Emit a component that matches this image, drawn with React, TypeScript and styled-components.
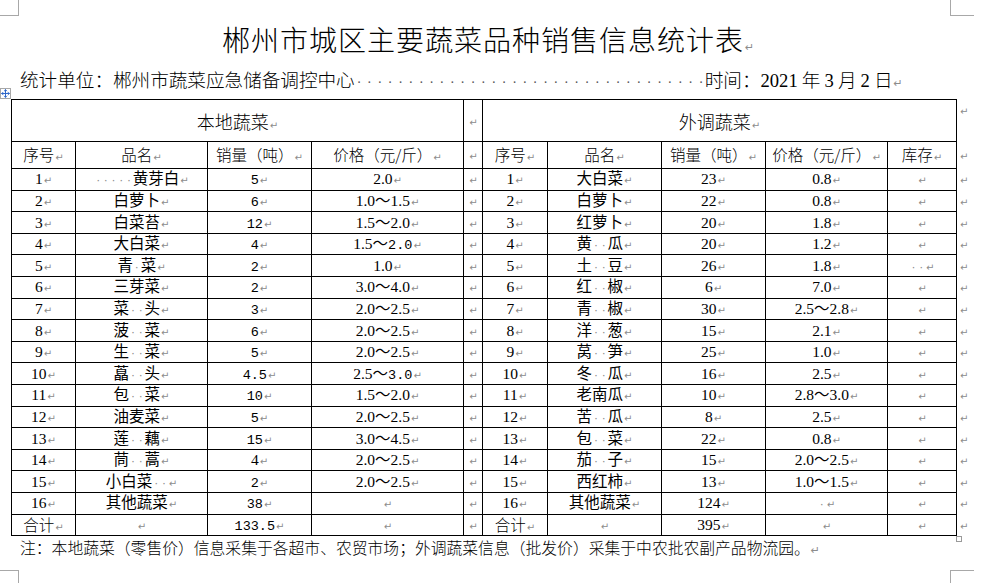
import React from 'react';
import styled, { createGlobalStyle, css } from 'styled-components';
import { Move } from 'lucide-react';

type LeftRow = [string, string, string, string];
type RightRow = [string, string, string, string, string];

const leftRows: LeftRow[] = [
  ['1', '·····黄芽白', '{5}', '2.0'],
  ['2', '白萝卜', '{6}', '1.0～1.5'],
  ['3', '白菜苔', '{12}', '1.5～2.0'],
  ['4', '大白菜', '{4}', '1.5～{2.0}'],
  ['5', '青·菜', '{2}', '1.0'],
  ['6', '三芽菜', '{2}', '3.0～4.0'],
  ['7', '菜··头', '{3}', '2.0～2.5'],
  ['8', '菠··菜', '{6}', '2.0～2.5'],
  ['9', '生··菜', '{5}', '2.0～2.5'],
  ['10', '藠··头', '{4.5}', '2.5～{3.0}'],
  ['11', '包··菜', '{10}', '1.5～2.0'],
  ['12', '油麦菜', '{5}', '2.0～2.5'],
  ['13', '莲··藕', '{15}', '3.0～4.5'],
  ['14', '茼··蒿', '4', '2.0～2.5'],
  ['15', '小白菜··', '{2}', '2.0～2.5'],
  ['16', '其他蔬菜', '{38}', ''],
];

const rightRows: RightRow[] = [
  ['1', '大白菜', '23', '0.8', ''],
  ['2', '白萝卜', '22', '0.8', ''],
  ['3', '红萝卜', '20', '1.8', ''],
  ['4', '黄··瓜', '20', '1.2', ''],
  ['5', '土··豆', '26', '1.8', '··'],
  ['6', '红··椒', '6', '7.0', ''],
  ['7', '青··椒', '30', '2.5～2.8', ''],
  ['8', '洋··葱', '15', '2.1', ''],
  ['9', '莴··笋', '25', '1.0', ''],
  ['10', '冬··瓜', '16', '2.5', ''],
  ['11', '老南瓜', '10', '2.8～3.0', ''],
  ['12', '苦··瓜', '8', '2.5', ''],
  ['13', '包··菜', '22', '0.8', ''],
  ['14', '茄··子', '15', '2.0～2.5', ''],
  ['15', '西红柿', '13', '1.0～1.5', ''],
  ['16', '其他蔬菜', '124', '·', ''],
];

const colWidths = [64, 132, 104, 152, 19, 65, 114, 104, 122, 69, 12];

// "·" is a visible space mark, {..} is text set in the narrow SimSun-like face
const content = (text: string) => {
  const parts: React.ReactNode[] = [];
  const re = /(\{[^}]*\}|·)/g;
  let last = 0;
  let m: RegExpExecArray | null;
  let k = 0;
  while ((m = re.exec(text))) {
    if (m.index > last) parts.push(text.slice(last, m.index));
    if (m[0] === '·') parts.push(<Dot key={k++}>·</Dot>);
    else parts.push(<Sim key={k++}>{m[0].slice(1, -1)}</Sim>);
    last = m.index + m[0].length;
  }
  if (last < text.length) parts.push(text.slice(last));
  return (
    <>
      {parts}
      <Mark>↵</Mark>
    </>
  );
};

const App = (): JSX.Element => {
  return (
    <Page>
      <GlobalStyle />
      <CropMark $corner='tl' />
      <CropMark $corner='tr' />
      <CropMark $corner='bl' />
      <CropMark $corner='br' />

      <Title>
        郴州市城区主要蔬菜品种销售信息统计表<Mark $big>↵</Mark>
      </Title>
      <InfoLine>
        <Lead>统计单位：郴州市蔬菜应急储备调控中心</Lead>
        <Leader>{'·'.repeat(37)}</Leader>
        <Lead>
          时间：<Num>2021</Num> 年 <Num>3</Num> 月 <Num>2</Num> 日<Mark $big>↵</Mark>
        </Lead>
      </InfoLine>

      <TableWrap>
        <MoveHandle>
          <Move size={9} strokeWidth={2.6} color='#2a64c8' />
        </MoveHandle>
        <Sheet>
          <colgroup>
            {colWidths.map((w, i) => (
              <Col key={i} $w={w} />
            ))}
          </colgroup>
          <tbody>
            <Row $h={42}>
              <GroupCell colSpan={4}>本地蔬菜<Mark>↵</Mark></GroupCell>
              <Cell>{content('')}</Cell>
              <GroupCell colSpan={5}>外调蔬菜<Mark>↵</Mark></GroupCell>
              <EndCell $top><Mark>↵</Mark></EndCell>
            </Row>
            <Row $h={27}>
              {['序号', '品名', '销量（吨）', '价格（元/斤）'].map((t) => (
                <HeadCell key={'l' + t}>{content(t)}</HeadCell>
              ))}
              <Cell>{content('')}</Cell>
              {['序号', '品名', '销量（吨）', '价格（元/斤）', '库存'].map((t) => (
                <HeadCell key={'r' + t}>{content(t)}</HeadCell>
              ))}
              <EndCell><Mark>↵</Mark></EndCell>
            </Row>
            {leftRows.map((l, i) => {
              const r = rightRows[i];
              return (
                <Row key={l[0]} $h={21.6}>
                  {l.map((t, j) => (
                    <Cell key={'l' + j}>{content(t)}</Cell>
                  ))}
                  <Cell>{content('')}</Cell>
                  {r.map((t, j) => (
                    <Cell key={'r' + j}>{content(t)}</Cell>
                  ))}
                  <EndCell><Mark>↵</Mark></EndCell>
                </Row>
              );
            })}
            <Row $h={21.6}>
              <HeadCell>{content('合计')}</HeadCell>
              <Cell>{content('')}</Cell>
              <Cell>{content('{133.5}')}</Cell>
              <Cell>{content('')}</Cell>
              <Cell>{content('')}</Cell>
              <HeadCell>{content('合计')}</HeadCell>
              <Cell>{content('')}</Cell>
              <Cell>{content('395')}</Cell>
              <Cell>{content('')}</Cell>
              <Cell>{content('')}</Cell>
              <EndCell><Mark>↵</Mark></EndCell>
            </Row>
          </tbody>
        </Sheet>
        <ResizeHandle />
      </TableWrap>

      <Note>
        注：本地蔬菜（零售价）信息采集于各超市、农贸市场；外调蔬菜信息（批发价）采集于中农批农副产品物流园。<Mark $big>↵</Mark>
      </Note>
    </Page>
  );
};

export default App;

const GlobalStyle = createGlobalStyle`
  html, body {
    margin: 0;
    padding: 0;
    background: #ffffff;
  }
`;

const Page = styled.div`
  position: relative;
  width: 993px;
  height: 583px;
  overflow: hidden;
  background: #ffffff;
  color: #000000;
  font-family: 'Liberation Serif', 'Noto Sans CJK SC', serif;
`;

const CropMark = styled.div<{ $corner: 'tl' | 'tr' | 'bl' | 'br' }>`
  position: absolute;
  border: 0 solid #a8a8a8;
  ${(p) =>
    p.$corner === 'tl' &&
    css`
      left: 0;
      top: 0;
      width: 18px;
      height: 15px;
      border-right-width: 1px;
      border-bottom-width: 1px;
    `}
  ${(p) =>
    p.$corner === 'tr' &&
    css`
      left: 950px;
      top: 0;
      width: 23px;
      height: 15px;
      border-left-width: 1px;
      border-bottom-width: 1px;
    `}
  ${(p) =>
    p.$corner === 'bl' &&
    css`
      left: 0;
      top: 570px;
      width: 18px;
      height: 13px;
      border-right-width: 1px;
      border-top-width: 1px;
    `}
  ${(p) =>
    p.$corner === 'br' &&
    css`
      left: 950px;
      top: 570px;
      width: 23px;
      height: 13px;
      border-left-width: 1px;
      border-top-width: 1px;
    `}
`;

const Mark = styled.span<{ $big?: boolean }>`
  font-family: 'DejaVu Sans', sans-serif;
  font-size: ${(p) => (p.$big ? '11px' : '10px')};
  font-weight: 400;
  line-height: 0;
  color: #8c8c8c;
  margin-left: 1px;
`;

const Dot = styled.span`
  display: inline-block;
  width: 7.7px;
  text-align: center;
  font-family: 'DejaVu Sans', sans-serif;
  font-size: 11px;
  line-height: 0;
  color: #8a8a8a;
`;

const Sim = styled.span`
  font-family: 'Liberation Mono', monospace;
  font-size: 13.5px;
  line-height: 0;
`;

const Title = styled.div`
  height: 36px;
  margin: 21px 0 0 11px;
  width: 945px;
  padding-left: 10px;
  box-sizing: border-box;
  text-align: center;
  font-family: 'Noto Sans CJK SC', sans-serif;
  font-size: 28px;
  letter-spacing: 1px;
  font-weight: 300;
  line-height: 36px;
  white-space: nowrap;
`;

const InfoLine = styled.div`
  display: flex;
  align-items: baseline;
  height: 24px;
  margin: 10px 0 0 20px;
  font-size: 18.6px;
  line-height: 24px;
  white-space: nowrap;
`;

const Lead = styled.span`
  flex: none;
  font-family: 'Noto Sans CJK SC', sans-serif;
  font-weight: 300;
`;

const Num = styled.span`
  font-family: 'Liberation Serif', serif;
  font-weight: 400;
`;

const Leader = styled.span`
  flex: none;
  width: 345px;
  margin-right: 5px;
  font-family: 'Liberation Serif', serif;
  color: #555555;
  font-size: 14px;
  line-height: 24px;
  letter-spacing: 5.7px;
  padding-left: 2px;
  box-sizing: border-box;
`;

const TableWrap = styled.div`
  position: relative;
  margin: 8px 0 0 11px;
  width: 957px;
`;

const MoveHandle = styled.div`
  position: absolute;
  left: -11px;
  top: -11px;
  width: 9px;
  height: 9px;
  border: 1px solid #a8a8a8;
  background: #ffffff;
  display: flex;
  align-items: center;
  justify-content: center;
`;

const ResizeHandle = styled.div`
  position: absolute;
  left: 945px;
  bottom: -6px;
  width: 4px;
  height: 4px;
  border: 1px solid #9a9a9a;
  background: #ffffff;
`;

const Sheet = styled.table`
  border-collapse: collapse;
  table-layout: fixed;
  width: 957px;
  font-size: 15.5px;
  line-height: 1.15;
`;

const Col = styled.col<{ $w: number }>`
  width: ${(p) => p.$w}px;
`;

const Row = styled.tr<{ $h: number }>`
  height: ${(p) => p.$h}px;
`;

const Cell = styled.td`
  border: 1px solid #000000;
  padding: 0;
  text-align: center;
  vertical-align: middle;
  white-space: nowrap;
  overflow: hidden;
`;

const HeadCell = styled(Cell)`
  font-family: 'Noto Sans CJK SC', sans-serif;
  font-weight: 300;
`;

const GroupCell = styled(HeadCell)`
  font-size: 18px;
  padding-top: 1px;
`;

const EndCell = styled.td<{ $top?: boolean }>`
  border: none;
  padding: ${(p) => (p.$top ? '0 0 22px 2px' : '0 0 0 2px')};
  text-align: left;
  vertical-align: middle;
`;

const Note = styled.div`
  height: 24px;
  margin: 0 0 0 20px;
  font-family: 'Noto Sans CJK SC', sans-serif;
  font-weight: 300;
  font-size: 15.8px;
  line-height: 24px;
  white-space: nowrap;
`;
